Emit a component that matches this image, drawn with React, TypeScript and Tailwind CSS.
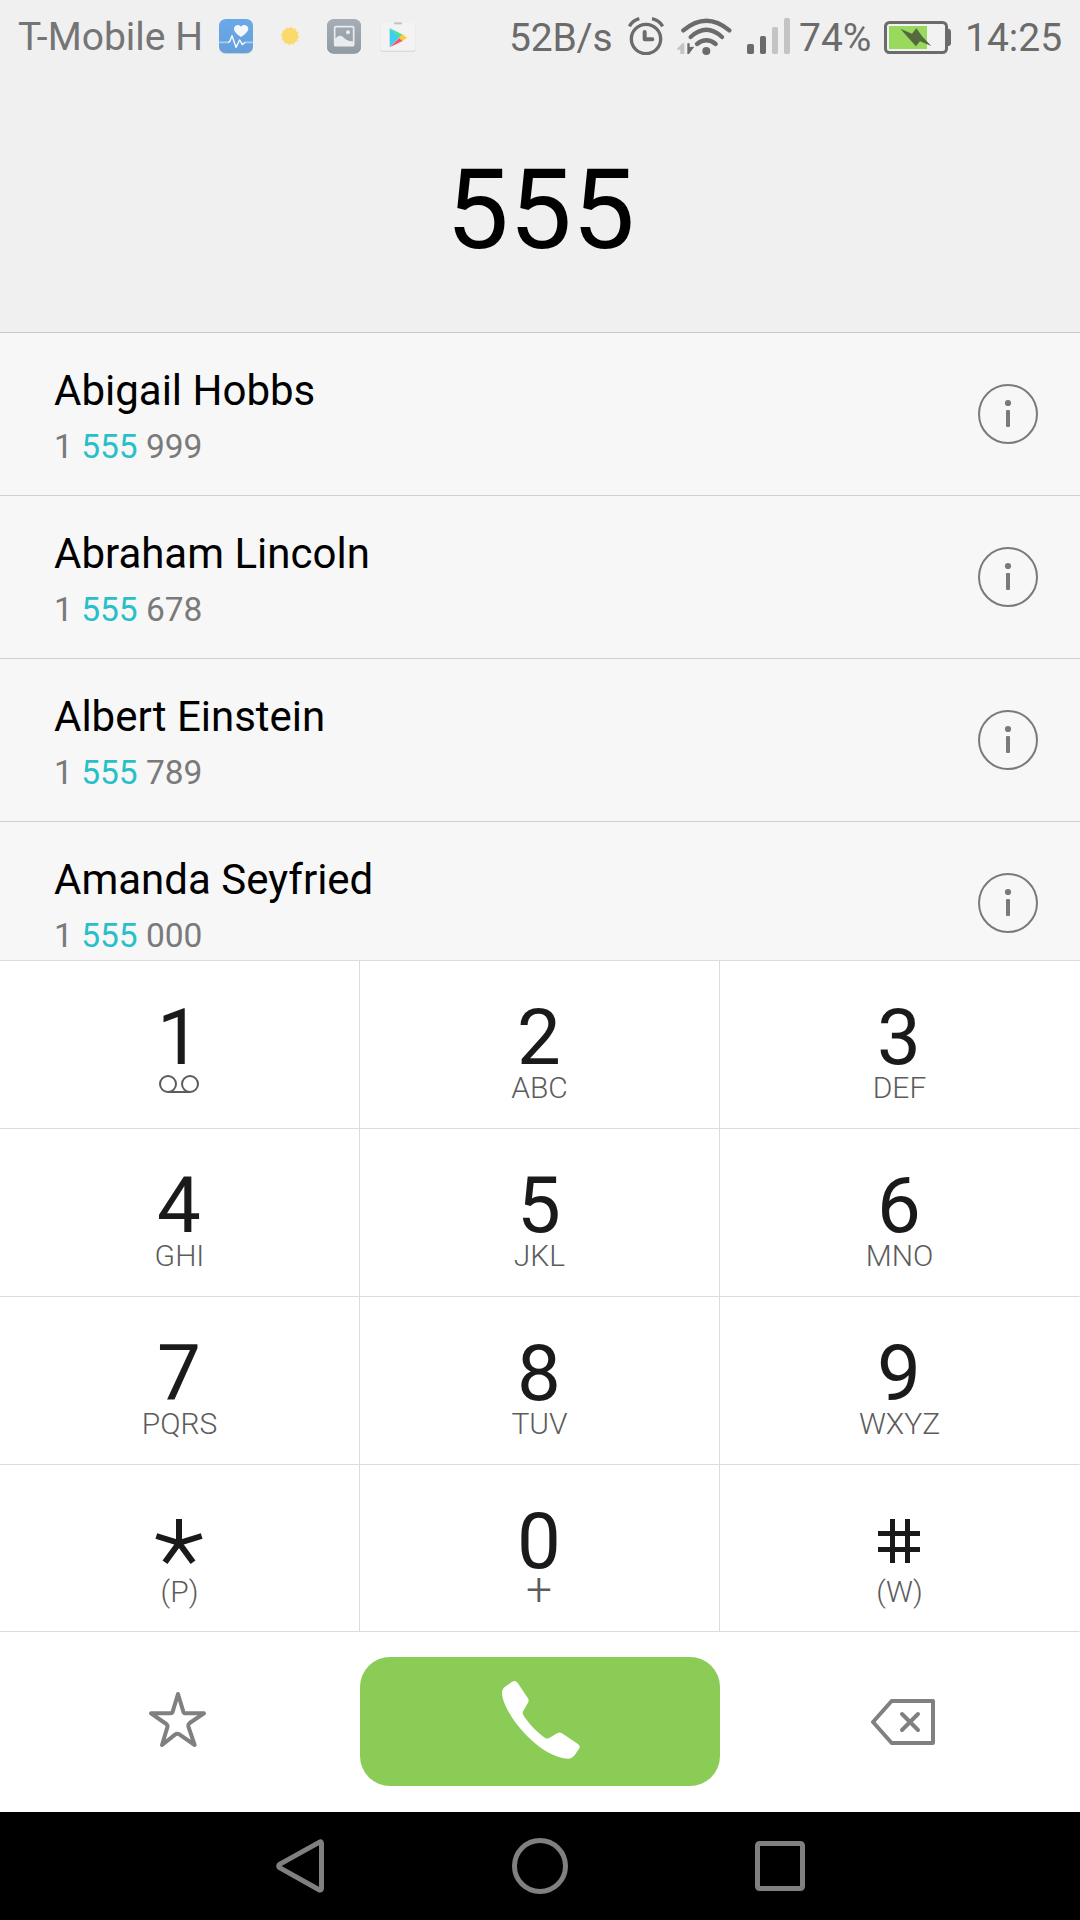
import React from 'react';

const contacts = [
  { name: 'Abigail Hobbs', prefix: '1', match: '555', rest: '999' },
  { name: 'Abraham Lincoln', prefix: '1', match: '555', rest: '678' },
  { name: 'Albert Einstein', prefix: '1', match: '555', rest: '789' },
  { name: 'Amanda Seyfried', prefix: '1', match: '555', rest: '000' },
];

const keys = [
  { digit: '1', sub: 'voicemail' },
  { digit: '2', sub: 'ABC' },
  { digit: '3', sub: 'DEF' },
  { digit: '4', sub: 'GHI' },
  { digit: '5', sub: 'JKL' },
  { digit: '6', sub: 'MNO' },
  { digit: '7', sub: 'PQRS' },
  { digit: '8', sub: 'TUV' },
  { digit: '9', sub: 'WXYZ' },
  { digit: '*', sub: '(P)' },
  { digit: '0', sub: '+' },
  { digit: '#', sub: '(W)' },
];

const HealthIcon = () => (
  <svg width="34" height="35" viewBox="0 0 102 105" fill="none">
    <rect x="0" y="2" width="102" height="102" rx="20" fill="#b9c3cd" />
    <rect width="102" height="102" rx="20" fill="url(#health)" />
    <path d="M0 70H30M78 70H102" stroke="#a9cbee" strokeWidth="5" />
    <path d="M28 70 L32 68 L39 50 L51 85 L62 63 L70 77 L78 70" stroke="#fff" strokeWidth="4" strokeLinejoin="round" />
    <path d="M66 54 C54 46 44 38 45 28 C46 17 60 14 66 23 C72 14 87 17 88 28 C88 38 78 46 66 54Z" fill="#f4f6fa" />
    <defs>
      <linearGradient id="health" x1="0" y1="0" x2="0" y2="1">
        <stop stopColor="#6aa9e8" />
        <stop offset="1" stopColor="#659fda" />
      </linearGradient>
    </defs>
  </svg>
);

const SunIcon = () => (
  <svg width="20" height="20" viewBox="0 0 20 20">
    <circle cx="10" cy="10" r="8.8" fill="none" stroke="#fbe092" strokeWidth="1.6" strokeDasharray="1.6 3" />
    <circle cx="10" cy="10" r="8.2" fill="#fbd96c" />
  </svg>
);

const GalleryIcon = () => (
  <svg width="34" height="35" viewBox="0 0 102 105">
    <rect y="2" width="102" height="102" rx="20" fill="#858c92" />
    <rect width="102" height="102" rx="20" fill="url(#gallery)" />
    <rect x="23" y="23" width="57" height="57" rx="3" fill="none" stroke="#e9ecee" strokeWidth="5" />
    <circle cx="63" cy="40" r="6" fill="#e9ecee" />
    <path d="M23 60 C31 52 40 46 48 54 C56 62 64 68 80 67 V80 H23Z" fill="#e9ecee" />
    <defs>
      <linearGradient id="gallery" x1="0" y1="0" x2="0" y2="1">
        <stop stopColor="#a4aeb6" />
        <stop offset="1" stopColor="#939ba2" />
      </linearGradient>
    </defs>
  </svg>
);

const PlayIcon = () => (
  <svg width="36" height="30" viewBox="0 0 108 90">
    <rect x="1" y="5" width="105" height="84" rx="6" fill="#d2d2d2" />
    <rect x="1" y="3" width="105" height="83" rx="6" fill="#f3f3f3" />
    <path d="M38 8 V3 H71 V8" fill="none" stroke="#f3f3f3" strokeWidth="6" />
    <rect x="42" y="1" width="24" height="6" fill="#c4c4c4" />
    <path d="M29 19 V75 L58 46Z" fill="#3fcdf0" />
    <path d="M29 18 L68 38 L58 47Z" fill="#43e397" />
    <path d="M29 76 L68 57 L58 47Z" fill="#f0566c" />
    <path d="M67 37 L81 47 L67 57 L57 47Z" fill="#fdcb35" />
  </svg>
);

const AlarmIcon = () => (
  <svg width="36" height="38" viewBox="0 0 108 114" fill="none" stroke="#6b6b6b">
    <circle cx="54" cy="66" r="44" strokeWidth="10" />
    <path d="M50 45 V67 H73" strokeWidth="12" strokeLinecap="round" strokeLinejoin="round" />
    <path d="M4 28 Q14 10 34 5 M72 5 Q94 10 104 28" strokeWidth="10" />
  </svg>
);

const WifiIcon = () => (
  <svg width="55" height="38" viewBox="0 0 165 114" fill="none" stroke="#6b6b6b" strokeWidth="13" strokeLinecap="round">
    <path d="M19 40 Q88 -18 157 40" />
    <path d="M41 60 Q88 17 135 60" />
    <path d="M60 81 Q88 59 116 81" />
    <circle cx="88" cy="102" r="12" fill="#6b6b6b" stroke="none" />
    <path d="M0 95 L16 79 H22 V111 H10 V98 H0Z" fill="#c4c4c4" stroke="none" />
    <path d="M31 79 H38 V90 L52 89 L36 111 H31Z" fill="#6b6b6b" stroke="none" />
  </svg>
);

const SignalIcon = () => (
  <svg width="43" height="36" viewBox="0 0 129 108">
    <rect x="0" y="78" width="21" height="30" rx="5" fill="#6b6b6b" />
    <rect x="39" y="54" width="18" height="54" rx="5" fill="#6b6b6b" />
    <rect x="75" y="27" width="18" height="81" rx="5" fill="#c4c4c4" />
    <rect x="111" y="0" width="18" height="108" rx="5" fill="#c4c4c4" />
  </svg>
);

const BatteryIcon = () => (
  <svg width="67" height="33" viewBox="0 0 201 99">
    <rect x="4.5" y="4.5" width="183" height="90" rx="12" fill="#f2f2f2" stroke="#6b6b6b" strokeWidth="9" />
    <path d="M190 23 H195 Q201 25 201 32 V67 Q201 74 195 75 H190Z" fill="#6b6b6b" />
    <rect x="15" y="15" width="114" height="69" fill="#99d95c" />
    <path d="M49 23 L84 38 L97 22 L116 48 L142 75 L108 61 L96 76 L74 52Z" fill="#55693f" />
  </svg>
);

const InfoIcon = () => (
  <svg width="60" height="60" viewBox="0 0 60 60" aria-label="info">
    <circle cx="30" cy="30" r="29" fill="none" stroke="#7a7a7a" strokeWidth="2" />
    <circle cx="30" cy="19" r="3.1" fill="#7a7a7a" />
    <rect x="28" y="26" width="4" height="17" rx="1" fill="#7a7a7a" />
  </svg>
);

const VoicemailIcon = () => (
  <svg width="40" height="18" viewBox="0 0 40 18" fill="none" stroke="#5c5c5c" strokeWidth="2">
    <circle cx="9" cy="9" r="8" />
    <circle cx="31" cy="9" r="8" />
    <path d="M9 17H31" />
  </svg>
);

const StarKeyIcon = () => (
  <svg className="mt-[14px]" width="48" height="46" viewBox="0 0 144 138" stroke="#1a1a1a" strokeWidth="18" aria-label="star">
    <path d="M72 72V0M72 72L4 51M72 72L140 51M72 72L30 130M72 72L114 130" />
  </svg>
);

const PoundKeyIcon = () => (
  <svg className="mt-[14px]" width="42" height="44" viewBox="0 0 42 44" stroke="#1a1a1a" strokeWidth="5" aria-label="pound">
    <path d="M14.5 0V44M29.5 0V44M0 14.5H42M0 30.5H42" />
  </svg>
);

const StatusBar = () => (
  <div className="flex h-[72px] items-start text-[#757575]">
    <span className="ml-[18px] mt-[13px] w-[201px] whitespace-nowrap text-[39px] leading-[48px]">T-Mobile H</span>
    <div className="mt-[19px] flex items-start">
      <HealthIcon />
      <div className="ml-[27px] mt-[7px]"><SunIcon /></div>
      <div className="ml-[27px]"><GalleryIcon /></div>
      <div className="ml-[19px] mt-[3px]"><PlayIcon /></div>
    </div>
    <div className="ml-auto flex items-start text-[39px] leading-[48px] text-[#6b6b6b]">
      <span className="mt-[14px] w-[119px] whitespace-nowrap tracking-[-0.2px]">52B/s</span>
      <div className="mt-[17px]"><AlarmIcon /></div>
      <div className="ml-[13px] mt-[17px]"><WifiIcon /></div>
      <div className="ml-[15px] mt-[18px]"><SignalIcon /></div>
      <span className="ml-[9px] mt-[14px] w-[85px] whitespace-nowrap">74%</span>
      <div className="mt-[21px]"><BatteryIcon /></div>
      <span className="ml-[14px] mt-[14px] w-[115px] whitespace-nowrap">14:25</span>
    </div>
  </div>
);

const Keypad = () => (
  <div className="grid grid-cols-3 border-t border-[#dcdcdc]">
    {keys.map(({ digit, sub }, i) => (
      <button
        key={digit}
        className={`flex flex-col items-center border-b border-r border-b-[#dcdcdc] pr-px pt-10 ${
          i < 9 ? 'h-[168px]' : 'h-[167px]'
        } ${i % 3 === 2 ? 'border-r-transparent' : 'border-r-[#dcdcdc]'}`}
      >
        <span className="flex h-[72px] justify-center text-[78px] leading-[74px] text-[#1a1a1a]">
          {digit === '*' ? <StarKeyIcon /> : digit === '#' ? <PoundKeyIcon /> : digit}
        </span>
        {sub === 'voicemail' ? (
          <span className="mt-[2px]"><VoicemailIcon /></span>
        ) : sub === '+' ? (
          <span className="-mt-[3px] text-[46px] font-light leading-[30px] text-[#5c5c5c]">+</span>
        ) : (
          <span className="pl-px text-[30px] font-light leading-[30px] text-[#5c5c5c]">{sub}</span>
        )}
      </button>
    ))}
  </div>
);

const ActionBar = () => (
  <div className="grid h-[180px] grid-cols-3 items-center">
    <button className="flex justify-center pb-[5px] pr-[5px]">
      <svg width="59" height="57" viewBox="144 693 177 171" fill="none" stroke="#808080" strokeWidth="12" strokeLinejoin="round" aria-label="favorites">
        <path d="M234 702 L250 755 Q252 760 257 760 H312 L269 789 Q264 793 265 799 L284 855 L238 823 Q232 819 226 823 L186 855 L202 802 Q204 796 199 792 L153 760 H211 Q217 760 218 755Z" />
      </svg>
    </button>
    <button className="mb-px flex h-[129px] items-center justify-center rounded-[30px] bg-[#8bcc57] pb-[3px] pl-px">
      <svg width="78" height="78" viewBox="485 125 233 233" fill="#fff" aria-label="call">
        <path d="M522 125 Q528 125 532 131 L563 177 Q566 183 563 189 L548 215 Q545 221 549 227 C565 252 590 278 614 295 Q620 299 626 295 L650 281 Q657 277 664 281 L713 314 Q719 319 716 326 L702 347 Q695 356 684 357 C650 358 600 330 560 289 C520 249 487 195 485 162 Q484 150 493 143 L513 129 Q517 126 522 125Z" />
      </svg>
    </button>
    <button className="flex justify-center pl-[6px]">
      <svg width="64" height="46" viewBox="93 117 192 138" fill="none" stroke="#808080" strokeWidth="12" strokeLinejoin="round" strokeLinecap="round" aria-label="delete">
        <path d="M99 186 L155 123 H279 V249 H155Z" />
        <path d="M186 162 L234 210 M234 162 L186 210" />
      </svg>
    </button>
  </div>
);

const NavBar = () => (
  <div className="flex h-[108px] items-center bg-black pl-[276px]">
    <svg width="48" height="54" viewBox="0 0 48 54" fill="none" stroke="#808080" strokeWidth="5" strokeLinejoin="round">
      <path d="M44 2.9 Q45.5 2.6 45.5 5 V49 Q45.5 51.4 43.5 51 L3.5 28.6 Q1.8 27 3.5 25.4Z" />
    </svg>
    <svg className="ml-[188px]" width="56" height="56" viewBox="0 0 56 56" fill="none" stroke="#808080" strokeWidth="5">
      <circle cx="28" cy="28" r="25.5" />
    </svg>
    <svg className="ml-[187px]" width="50" height="50" viewBox="0 0 50 50" fill="none" stroke="#808080" strokeWidth="5">
      <rect x="2.5" y="2.5" width="45" height="45" rx="2" />
    </svg>
  </div>
);

export default function App() {
  return (
    <div className="h-[1920px] w-[1080px] overflow-hidden bg-white font-[Roboto,sans-serif]">
      <header className="h-[333px] border-b border-[#c8c8c8] bg-[#f0f0f0]">
        <StatusBar />
        <div className="pl-px pt-[82px] text-center text-[112px] leading-[112px] text-black">555</div>
      </header>

      <div className="h-[627px] overflow-hidden bg-[#f7f7f7]">
        {contacts.map((contact) => (
          <div key={contact.name} className="flex h-[163px] items-center justify-between border-b border-[#cfcfcf] pl-[54px] pr-[42px]">
            <div className="h-full pt-[34px]">
              <div className="text-[42px] leading-[48px] text-black">{contact.name}</div>
              <div className="mt-3 text-[33.5px] leading-[40px] text-[#7a7a7a]">
                {contact.prefix} <span className="text-[#27c0c9]">{contact.match}</span> {contact.rest}
              </div>
            </div>
            <InfoIcon />
          </div>
        ))}
      </div>

      <Keypad />
      <ActionBar />
      <NavBar />
    </div>
  );
}
